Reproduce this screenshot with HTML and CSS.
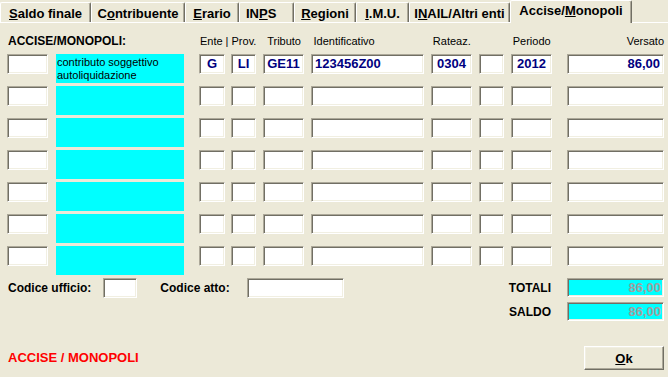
FILE: index.html
```html
<!DOCTYPE html>
<html lang="it">
<head>
    <meta charset="UTF-8">
    <meta name="viewport" content="width=device-width, initial-scale=1.0">
    <title>F24 - Accise/Monopoli</title>
    <link rel="stylesheet" href="styles.css">
</head>
<body>

    <div class="tabs">
        <div class="tab t-saldo"><u>S</u>aldo finale</div>
        <div class="tab t-contr">C<u>o</u>ntribuente</div>
        <div class="tab t-erario"><u>E</u>rario</div>
        <div class="tab t-inps">IN<u>P</u>S</div>
        <div class="tab t-reg"><u>R</u>egioni</div>
        <div class="tab t-imu"><u>I</u>.M.U.</div>
        <div class="tab t-inail">I<u>N</u>AIL/Altri enti</div>
        <div class="tab t-accise active">Accise/<u>M</u>onopoli</div>
    </div>

    <div class="panel">
        <!-- intestazione colonne -->
        <div class="head">
            <div class="h-title">ACCISE/MONOPOLI:</div>
            <div class="h-ente">Ente | Prov.</div>
            <div class="c-trib h-center">Tributo</div>
            <div class="c-id h-left">Identificativo</div>
            <div class="c-rat h-center">Rateaz.</div>
            <div class="c-x"></div>
            <div class="c-per h-center">Periodo</div>
            <div class="c-vers h-right">Versato</div>
        </div>

        <div class="row">
            <div class="fld c-cod"></div>
            <div class="desc c-desc">contributo soggettivo<br>autoliquidazione</div>
            <div class="fld c-ente center">G</div>
            <div class="fld c-prov center">LI</div>
            <div class="fld c-trib center">GE11</div>
            <div class="fld c-id">123456Z00</div>
            <div class="fld c-rat center">0304</div>
            <div class="fld c-x"></div>
            <div class="fld c-per center">2012</div>
            <div class="fld c-vers right">86,00</div>
        </div>
        <div class="row">
            <div class="fld c-cod"></div>
            <div class="desc c-desc"></div>
            <div class="fld c-ente"></div>
            <div class="fld c-prov"></div>
            <div class="fld c-trib"></div>
            <div class="fld c-id"></div>
            <div class="fld c-rat"></div>
            <div class="fld c-x"></div>
            <div class="fld c-per"></div>
            <div class="fld c-vers"></div>
        </div>
        <div class="row">
            <div class="fld c-cod"></div>
            <div class="desc c-desc"></div>
            <div class="fld c-ente"></div>
            <div class="fld c-prov"></div>
            <div class="fld c-trib"></div>
            <div class="fld c-id"></div>
            <div class="fld c-rat"></div>
            <div class="fld c-x"></div>
            <div class="fld c-per"></div>
            <div class="fld c-vers"></div>
        </div>
        <div class="row">
            <div class="fld c-cod"></div>
            <div class="desc c-desc"></div>
            <div class="fld c-ente"></div>
            <div class="fld c-prov"></div>
            <div class="fld c-trib"></div>
            <div class="fld c-id"></div>
            <div class="fld c-rat"></div>
            <div class="fld c-x"></div>
            <div class="fld c-per"></div>
            <div class="fld c-vers"></div>
        </div>
        <div class="row">
            <div class="fld c-cod"></div>
            <div class="desc c-desc"></div>
            <div class="fld c-ente"></div>
            <div class="fld c-prov"></div>
            <div class="fld c-trib"></div>
            <div class="fld c-id"></div>
            <div class="fld c-rat"></div>
            <div class="fld c-x"></div>
            <div class="fld c-per"></div>
            <div class="fld c-vers"></div>
        </div>
        <div class="row">
            <div class="fld c-cod"></div>
            <div class="desc c-desc"></div>
            <div class="fld c-ente"></div>
            <div class="fld c-prov"></div>
            <div class="fld c-trib"></div>
            <div class="fld c-id"></div>
            <div class="fld c-rat"></div>
            <div class="fld c-x"></div>
            <div class="fld c-per"></div>
            <div class="fld c-vers"></div>
        </div>
        <div class="row">
            <div class="fld c-cod"></div>
            <div class="desc c-desc"></div>
            <div class="fld c-ente"></div>
            <div class="fld c-prov"></div>
            <div class="fld c-trib"></div>
            <div class="fld c-id"></div>
            <div class="fld c-rat"></div>
            <div class="fld c-x"></div>
            <div class="fld c-per"></div>
            <div class="fld c-vers"></div>
        </div>

        <!-- codici e totali -->
        <div class="bottom">
            <div class="codes">
                <span class="lbl">Codice ufficio:</span>
                <div class="fld f-uff"></div>
                <span class="lbl l-atto">Codice atto:</span>
                <div class="fld f-atto"></div>
            </div>
            <div class="totals">
                <span class="lbl tot-lbl">TOTALI</span>
                <div class="fld tot right">86,00</div>
                <span class="lbl tot-lbl">SALDO</span>
                <div class="fld tot saldo right">86,00</div>
            </div>
        </div>

        <div class="footer">
            <span class="section-name">ACCISE / MONOPOLI</span>
            <button class="btn-ok"><u>O</u>k</button>
        </div>
    </div>

</body>
</html>
```

FILE: styles.css
```css
body {
    margin: 0;
    background-color: #ece9d8;
    font-family: "Liberation Sans", Arial, sans-serif;
    font-size: 11px;
    color: #000;
    width: 668px;
    height: 377px;
    overflow: hidden;
}

/* linguette */
.tabs {
    display: flex;
    align-items: flex-end;
    height: 22px;
}
.tab {
    box-sizing: border-box;
    height: 20px;
    display: flex;
    align-items: center;
    justify-content: center;
    border-left: 1px solid #fff;
    border-top: 1px solid #fff;
    border-right: 1px solid #716f64;
    border-radius: 2px 2px 0 0;
    box-shadow: inset -1px 0 0 #aca899;
    font-size: 13px;
    font-weight: bold;
    padding-top: 1px;
}
.tab u {
    text-underline-offset: 1px;
}
.t-saldo { width: 91px; }
.t-contr { width: 94px; }
.t-erario { width: 54px; }
.t-inps { width: 55px; justify-content: flex-start; padding-left: 6px; }
.t-reg { width: 62px; }
.t-imu { width: 53px; }
.t-inail { width: 101px; }
.tab.active {
    width: 122px;
    height: 23px;
    margin-bottom: -1px;
    padding-top: 0;
    padding-bottom: 3px;
    background: #ece9d8;
    position: relative;
    z-index: 1;
}

/* pannello */
.panel {
    border-top: 1px solid #fff;
    padding: 0 4px 0 7px;
}
.head {
    display: flex;
    height: 16px;
    line-height: 16px;
    margin-top: 10px;
    margin-bottom: 5px;
}
.h-title {
    width: 177px;
    font-size: 12px;
    font-weight: bold;
    padding-left: 1px;
}
.h-ente {
    margin-left: 15px;
    width: 57px;
    text-align: center;
}
.h-center { text-align: center; }
.h-left { padding-left: 2px; box-sizing: border-box; }
.h-right { text-align: right; }

.row {
    display: flex;
    align-items: flex-start;
    height: 29px;
    margin-bottom: 3px;
}

/* colonne */
.c-cod { width: 41px; }
.c-desc { margin-left: 8px; width: 128px; }
.c-ente { margin-left: 15px; width: 26px; }
.c-prov { margin-left: 6px; width: 25px; }
.c-trib { margin-left: 7px; width: 41px; }
.c-id { margin-left: 7px; width: 113px; }
.c-rat { margin-left: 7px; width: 41px; }
.c-x { margin-left: 7px; width: 25px; }
.c-per { margin-left: 7px; width: 41px; }
.c-vers { margin-left: 15px; width: 97px; }

/* campi incassati */
.fld {
    box-sizing: border-box;
    height: 20px;
    background: #fff;
    border: 1px solid;
    border-color: #aca899 #fff #fff #aca899;
    box-shadow: inset 1px 1px 0 #716f64, inset -1px -1px 0 #f1efe2;
    font-size: 13px;
    font-weight: bold;
    line-height: 18px;
    color: #000080;
    padding: 0 3px;
    white-space: nowrap;
    overflow: hidden;
}
.center { text-align: center; padding: 0; }
.right { text-align: right; }

.desc {
    box-sizing: border-box;
    height: 29px;
    background: #00ffff;
    padding: 2px 1px 0;
    line-height: 13px;
}

/* parte bassa */
.bottom {
    display: flex;
    justify-content: space-between;
    align-items: flex-start;
}
.lbl {
    font-size: 12px;
    font-weight: bold;
}
.codes {
    display: flex;
    align-items: center;
    height: 20px;
    padding-left: 1px;
}
.f-uff { width: 34px; margin-left: 12px; }
.l-atto { margin-left: 23px; }
.f-atto { width: 97px; margin-left: 17px; }

.totals {
    display: grid;
    grid-template-columns: auto 97px;
    column-gap: 16px;
    row-gap: 5px;
    align-items: center;
}
.tot-lbl { text-align: right; }
.tot {
    background: #00ffff;
    color: #a0a0a0;
    height: 19px;
    line-height: 17px;
    padding-right: 2px;
}

.footer {
    display: flex;
    justify-content: space-between;
    align-items: center;
    margin-top: 25px;
}
.section-name {
    color: #ff0000;
    font-size: 13px;
    font-weight: bold;
    padding-left: 1px;
    margin-top: -2px;
}
.btn-ok {
    width: 80px;
    height: 24px;
    background: #ece9d8;
    border: 1px solid;
    border-color: #fff #716f64 #716f64 #fff;
    box-shadow: inset -1px -1px 0 #aca899, inset 1px 1px 0 #f1efe2;
    font-family: "Liberation Sans", Arial, sans-serif;
    font-size: 13px;
    font-weight: bold;
    color: #000;
    padding: 0;
    cursor: pointer;
}
```
